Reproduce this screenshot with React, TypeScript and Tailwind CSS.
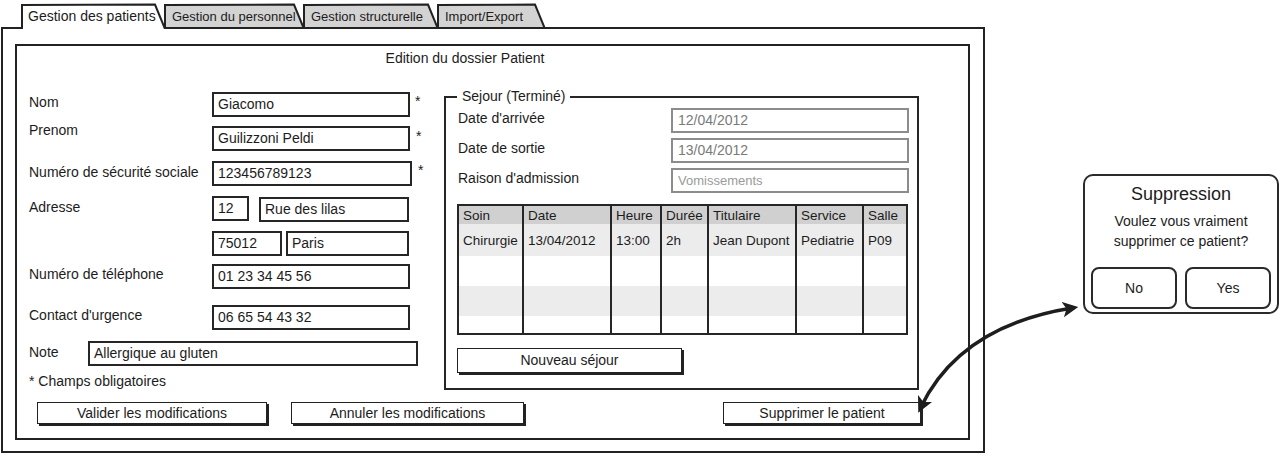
import React from "react";

type Tab = { label: string; w: number; z: string; active?: boolean };

const TABS: Tab[] = [
  { label: "Gestion des patients", w: 145, z: "z-20", active: true },
  { label: "Gestion du personnel", w: 141, z: "z-[3]" },
  { label: "Gestion structurelle", w: 136, z: "z-[2]" },
  { label: "Import/Export", w: 109, z: "z-[1]" },
];

const COLS = [
  "w-[63px]",
  "w-[88px] border-l-2",
  "w-[50px] border-l-2",
  "w-[47px] border-l-2",
  "w-[88px] border-l-2",
  "w-[67px] border-l-2",
  "w-[44px] border-l-2",
];

const HEADERS = ["Soin", "Date", "Heure", "Durée", "Titulaire", "Service", "Salle"];

const ROWS = [
  {
    cls: "h-[32px] bg-[#ececec]",
    cells: ["Chirurgie", "13/04/2012", "13:00", "2h", "Jean Dupont", "Pediatrie", "P09"],
  },
  { cls: "h-[30px] bg-white", cells: [] as string[] },
  { cls: "h-[30px] bg-[#ececec]", cells: [] as string[] },
  { cls: "h-[17px] bg-white", cells: [] as string[] },
];

function TabShape({ tab }: { tab: Tab }) {
  const w = tab.w;
  const outline = `M1 26 L1 2 L${w - 11} 1.5 L${w - 1} 26`;
  return (
    <div className={`relative -ml-[2px] h-[26px] shrink-0 first:ml-0 ${tab.z}`} style={{ width: w }}>
      <svg className="absolute left-0 top-0" width={w} height={26}>
        <path d={`${outline} Z`} fill={tab.active ? "#ffffff" : "#d3d3d3"} />
        <path d={outline} fill="none" stroke="#222" strokeWidth={2} />
      </svg>
      <span
        className={`relative block whitespace-nowrap ${
          tab.active ? "pl-[7px] pt-[5px] text-[14px]" : "pl-[8px] pt-[5px] text-[13px]"
        } leading-[17px]`}
      >
        {tab.label}
      </span>
    </div>
  );
}

function Field({
  value,
  className = "",
  muted = false,
}: {
  value: string;
  className?: string;
  muted?: boolean;
}) {
  return (
    <div
      className={`flex h-[25px] shrink-0 items-center whitespace-nowrap border-2 bg-white ${
        muted ? "border-[#8c8c8c] pl-[5px] text-[#7a7a7a]" : "border-[#262626] pl-[4px]"
      } ${className}`}
    >
      {value}
    </div>
  );
}

function SketchButton({ label, className = "" }: { label: string; className?: string }) {
  return (
    <button
      className={`flex shrink-0 items-center justify-center border border-[#222] bg-white text-[14px] leading-[17px] shadow-[2px_2px_0_#222] ${className}`}
    >
      {label}
    </button>
  );
}

function FormRow({
  label,
  labelPad,
  mt,
  children,
}: {
  label: string;
  labelPad: string;
  mt: string;
  children: React.ReactNode;
}) {
  return (
    <div className={`flex items-start ${mt}`}>
      <span className={`w-[183px] shrink-0 whitespace-nowrap ${labelPad}`}>{label}</span>
      {children}
    </div>
  );
}

function Star({ className }: { className: string }) {
  return <span className={`leading-[17px] ${className}`}>*</span>;
}

function SejourRow({ label, value, mt, small }: { label: string; value: string; mt: string; small?: boolean }) {
  return (
    <div className={`flex items-start ${mt}`}>
      <span className="w-[213px] shrink-0 whitespace-nowrap pt-[2px]">{label}</span>
      <Field
        value={value}
        muted
        className={`w-[238px] ${small ? "text-[13px] text-[#9a9a9a]" : ""}`}
      />
    </div>
  );
}

export default function App() {
  return (
    <div className="relative h-[457px] w-[1281px] overflow-hidden bg-white font-['Liberation_Sans',Arial,sans-serif] text-[14px] leading-[17px] text-[#1c1c1c]">
      <div className="flex items-start pl-[1px] pt-[3px]">
        <div className="w-[984px] shrink-0">
          <div className="-mb-[2px] flex pl-[20px]">
            {TABS.map((t) => (
              <TabShape key={t.label} tab={t} />
            ))}
          </div>

          <div className="relative z-10 h-[426px] w-[984px] border-2 border-[#222] pl-[12px] pt-[15px]">
            <div className="h-[396px] w-[955px] border-2 border-[#222]">
              <div className="h-[42px] w-[896px] pt-[4px] text-center">Edition du dossier Patient</div>

              <div className="flex h-[302px]">
                {/* patient form */}
                <div className="w-[427px] shrink-0 pl-[12px]">
                  <FormRow label="Nom" labelPad="pt-[2px]" mt="mt-[4px]">
                    <Field value="Giacomo" className="w-[198px]" />
                    <Star className="ml-[5px] mt-[1px]" />
                  </FormRow>
                  <FormRow label="Prenom" labelPad="-mt-[4px]" mt="mt-[9px]">
                    <Field value="Guilizzoni Peldi" className="w-[198px]" />
                    <Star className="ml-[6px] mt-[2px]" />
                  </FormRow>
                  <FormRow label="Numéro de sécurité sociale" labelPad="pt-[3px]" mt="mt-[10px]">
                    <Field value="123456789123" className="w-[200px]" />
                    <Star className="ml-[6px] mt-[1px]" />
                  </FormRow>
                  <FormRow label="Adresse" labelPad="pt-[3px]" mt="mt-[10px]">
                    <Field value="12" className="w-[37px]" />
                    <Field value="Rue des lilas" className="ml-[10px] mt-[1px] w-[150px]" />
                  </FormRow>
                  <div className="mt-[9px] flex pl-[183px]">
                    <Field value="75012" className="w-[70px]" />
                    <Field value="Paris" className="ml-[4px] w-[123px]" />
                  </div>
                  <FormRow label="Numéro de téléphone" labelPad="pt-[2px]" mt="mt-[8px]">
                    <Field value="01 23 34 45 56" className="w-[198px]" />
                  </FormRow>
                  <FormRow label="Contact d'urgence" labelPad="pt-[2px]" mt="mt-[16px]">
                    <Field value="06 65 54 43 32" className="w-[198px]" />
                  </FormRow>
                  <div className="mt-[11px] flex items-start">
                    <span className="w-[59px] shrink-0 pt-[3px]">Note</span>
                    <Field value="Allergique au gluten" className="w-[330px]" />
                  </div>
                  <div className="mt-[7px]">* Champs obligatoires</div>
                </div>

                {/* stay */}
                <fieldset className="h-[302px] w-[475px] shrink-0 border-2 border-[#262626] p-0">
                  <legend className="ml-[11px] px-[5px] leading-[17px]">Sejour (Terminé)</legend>
                  <div className="pl-[12px]">
                    <SejourRow label="Date d'arrivée" value="12/04/2012" mt="mt-[3px]" />
                    <SejourRow label="Date de sortie" value="13/04/2012" mt="mt-[5px]" />
                    <SejourRow label="Raison d'admission" value="Vomissements" mt="mt-[5px]" small />

                    <div className="ml-[-1px] mt-[11px] w-[451px] border-2 border-[#262626] text-[13.5px]">
                      <div className="flex h-[18px] bg-[#d0d0d0]">
                        {HEADERS.map((h, i) => (
                          <div
                            key={h}
                            className={`flex items-center overflow-hidden whitespace-nowrap border-[#262626] pl-[4px] ${COLS[i]}`}
                          >
                            {h}
                          </div>
                        ))}
                      </div>
                      {ROWS.map((r, ri) => (
                        <div key={ri} className={`flex ${r.cls}`}>
                          {COLS.map((c, i) => (
                            <div
                              key={i}
                              className={`flex items-center overflow-hidden whitespace-nowrap border-[#262626] pl-[4px] ${c}`}
                            >
                              {r.cells[i] ?? ""}
                            </div>
                          ))}
                        </div>
                      ))}
                    </div>

                    <SketchButton label="Nouveau séjour" className="ml-[-1px] mt-[13px] h-[25px] w-[225px]" />
                  </div>
                </fieldset>
              </div>

              <div className="mt-[12px] flex pl-[20px]">
                <SketchButton label="Valider les modifications" className="h-[22px] w-[230px]" />
                <SketchButton label="Annuler les modifications" className="ml-[24px] h-[22px] w-[233px]" />
                <SketchButton label="Supprimer le patient" className="ml-[199px] h-[22px] w-[198px]" />
              </div>
            </div>
          </div>
        </div>

        {/* confirmation dialog */}
        <div className="ml-[98px] mt-[171px] flex h-[140px] w-[196px] shrink-0 flex-col items-center rounded-[10px] border-2 border-[#2a2a2a] bg-white px-[6px] pt-[7px]">
          <div className="text-[18px] leading-[22px]">Suppression</div>
          <div className="mt-[6px] text-center leading-[20px]">
            Voulez vous vraiment
            <br />
            supprimer ce patient?
          </div>
          <div className="mt-[16px] flex w-full gap-[8px]">
            <button className="h-[42px] flex-1 rounded-[8px] border-2 border-[#2a2a2a]">No</button>
            <button className="h-[42px] flex-1 rounded-[8px] border-2 border-[#2a2a2a]">Yes</button>
          </div>
        </div>
      </div>

      <svg className="pointer-events-none absolute left-0 top-0 z-30" width={1281} height={457}>
        <defs>
          <marker
            id="head"
            viewBox="0 0 10 10"
            refX="6"
            refY="5"
            markerWidth="4.5"
            markerHeight="4.5"
            orient="auto-start-reverse"
          >
            <path d="M0 0 L10 5 L0 10 L2.5 5 Z" fill="#1e1e1e" />
          </marker>
        </defs>
        <path
          d="M921 407 Q960 326 1072 308"
          fill="none"
          stroke="#1e1e1e"
          strokeWidth={3.5}
          strokeLinecap="round"
          markerStart="url(#head)"
          markerEnd="url(#head)"
        />
      </svg>
    </div>
  );
}
